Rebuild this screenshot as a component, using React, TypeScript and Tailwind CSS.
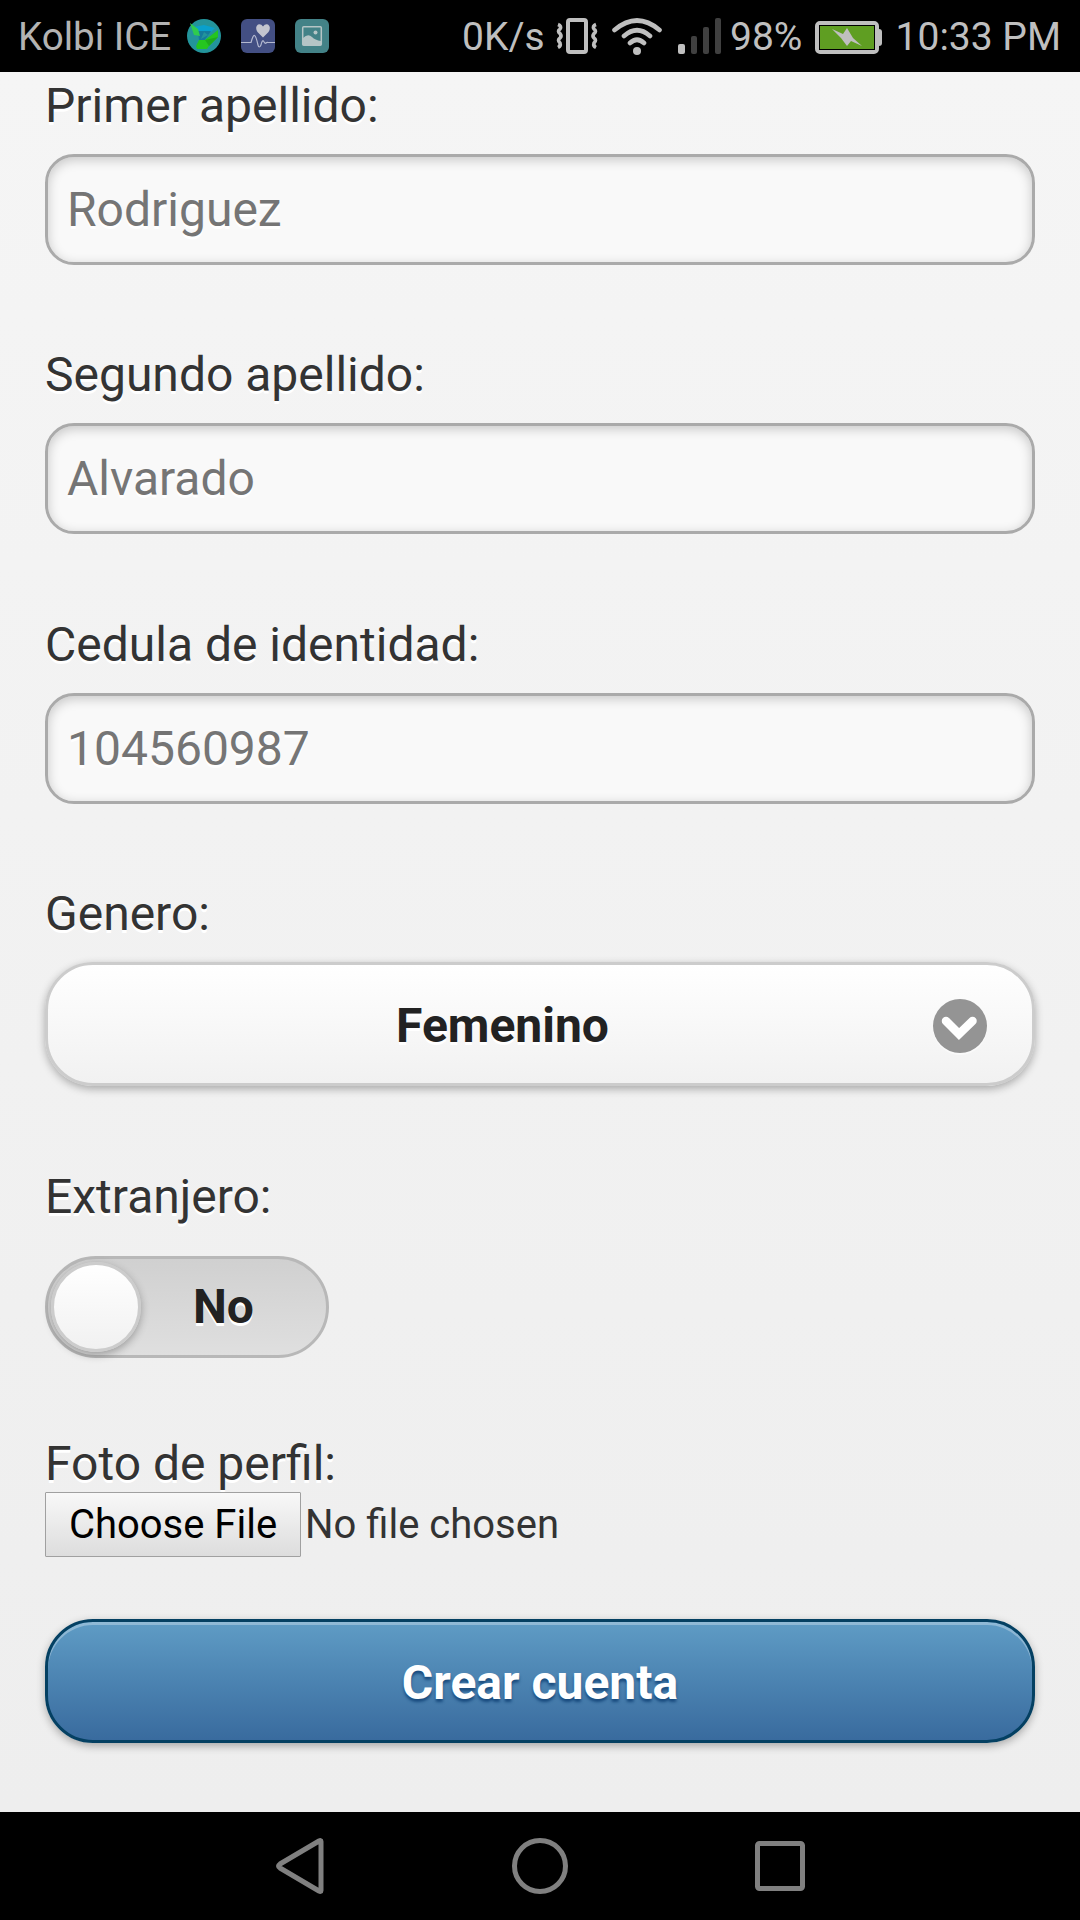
import React from "react";

function StatusBar() {
  return (
    <header className="flex h-[72px] items-center bg-black pl-[18px] pr-[19px] text-[39px] leading-[72px] text-[#bfbfbf]">
      <span className="w-[169px] shrink-0 whitespace-nowrap pt-[2px] text-[38.6px] text-[#b3b3b3]">Kolbi ICE</span>
      <svg width="34" height="34" viewBox="0 0 34 34" className="shrink-0">
        <circle cx="17" cy="17" r="17" fill="#23949b" />
        <path d="M7 8L17 6L28 9L24 13L11 12Z" fill="#0aa0cc" />
        <path d="M11 12L24 12L17 22L12 21Z" fill="#147a9c" />
        <path d="M17 13L21 16L14 20Z" fill="#23949b" />
        <path d="M3 4L11 10L13 17L7 16Z" fill="#2fcb4e" />
        <path d="M31 11V18L22 27L20 30H10L9 27L12 21L18 21Z" fill="#25c520" />
        <path d="M18 21L31 18L22 27Z" fill="#1daa1c" />
      </svg>
      <svg width="34" height="34" viewBox="0 0 34 34" className="ml-5 shrink-0">
        <rect width="34" height="34" rx="6" fill="#434f83" />
        <path d="M0 23.500H10Q12 16 13.500 16.500Q15 17 17 26Q18 30 20 26Q21 21 22.500 22Q24 25 25 24Q26 23 27 23.500H34" fill="none" stroke="#b4b9d0" strokeWidth="1.2" />
        <path d="M22 18.500L16.500 13Q13.500 8 17 5.500Q20 4.500 22 7.500Q24 4.500 27 5.500Q30.500 8 27.500 13Z" fill="#c3c5cf" />
      </svg>
      <svg width="34" height="34" viewBox="0 0 34 34" className="ml-5 shrink-0">
        <rect width="34" height="34" rx="6" fill="#438287" />
        <rect x="7.700" y="7.700" width="18.600" height="18.600" rx="1" fill="none" stroke="#b5c5c6" strokeWidth="1.500" />
        <circle cx="20.500" cy="13.500" r="2" fill="#b5c5c6" />
        <path d="M8 19Q13 14 17 18Q20 21 26 22V26H8Z" fill="#b5c5c6" />
      </svg>
      <span className="ml-[133px] w-[93px] shrink-0 whitespace-nowrap pt-[2px]">0K/s</span>
      <svg width="44" height="38" viewBox="0 0 44 38" className="shrink-0" fill="none" stroke="#bfbfbf">
        <rect x="13" y="3" width="18" height="32" rx="2" strokeWidth="4" />
        <path d="M3 7.500Q7 9 5 12Q2 14 5 16.500Q7 19 5 21Q2 23 5 26Q6 29 3 30.500M41 7.500Q37 9 39 12Q42 14 39 16.500Q37 19 39 21Q42 23 39 26Q38 29 41 30.500" strokeWidth="3.600" />
      </svg>
      <svg width="54" height="40" viewBox="0 0 54 40" className="ml-[11px] shrink-0" fill="none" stroke="#bfbfbf" strokeWidth="4.600" strokeLinecap="round">
        <path d="M4.500 14Q27 -5 49.500 14M14 20Q27 8.500 40 20M20 27Q27 20.500 34 27" />
        <circle cx="27" cy="35" r="4" fill="#bfbfbf" stroke="none" />
      </svg>
      <svg width="44" height="36" viewBox="0 0 44 36" className="ml-[14px] shrink-0">
        <rect x="0" y="26" width="7" height="10" rx="2" fill="#bfbfbf" />
        <rect x="13" y="18" width="6" height="18" rx="2" fill="#404040" />
        <rect x="25" y="9" width="6" height="27" rx="2" fill="#404040" />
        <rect x="37" y="0" width="6" height="36" rx="2" fill="#404040" />
      </svg>
      <span className="ml-[8px] w-[85px] shrink-0 whitespace-nowrap pt-[2px]">98%</span>
      <svg width="68" height="34" viewBox="0 0 68 34" className="mt-[4px] shrink-0">
        <rect x="2" y="2" width="60" height="29" rx="3" fill="none" stroke="#bfbfbf" strokeWidth="4" />
        <rect x="4" y="4" width="56" height="25" fill="#000" />
        <rect x="5" y="5" width="54" height="23" fill="#5f9e22" />
        <path d="M64 8Q67 8 67 11V22Q67 25 64 25Z" fill="#bfbfbf" />
        <path d="M17 8L28 13L32 7L38 17L47 25L36 20L32 25L26 17Z" fill="#bfbfbf" />
      </svg>
      <span className="ml-auto whitespace-nowrap pt-[2px]">10:33 PM</span>
    </header>
  );
}

const label = "block whitespace-nowrap pt-px text-[48px] leading-[66px] text-[#333] [text-shadow:0_3px_0_#fff]";

function Field({ title, value }: { title: string; value: string }) {
  return (
    <div className="mb-[76.4px]">
      <label className={label}>{title}</label>
      <div className="mt-[15px] flex h-[111px] items-center rounded-[29px] border-[3px] border-[#aaa] bg-[#f9f9f9] pl-[19px] pt-px text-[48px] leading-[56px] text-[#757575] [text-shadow:0_3px_0_#fff] shadow-[inset_0_3px_12px_rgba(0,0,0,0.2)]">
        {value}
      </div>
    </div>
  );
}

export default function App() {
  return (
    <div className="flex h-[1920px] w-[1080px] flex-col overflow-hidden bg-black font-[Roboto,sans-serif]">
      <StatusBar />
      <main className="flex h-[1740px] flex-col bg-linear-to-b from-[#f5f5f5] to-[#eee] px-[45px]">
        <Field title="Primer apellido:" value="Rodriguez" />
        <Field title="Segundo apellido:" value="Alvarado" />
        <Field title="Cedula de identidad:" value="104560987" />
        <label className={label}>Genero:</label>
        <div className="mt-[14.8px] flex h-[124px] shrink-0 items-center rounded-[48px] border-[3px] border-[#ccc] bg-linear-to-b from-white to-[#f1f1f1] pl-[54px] pr-[45px] shadow-[0_3px_9px_rgba(0,0,0,0.3)]">
          <span className="flex-1 pr-[30px] pt-[4px] text-center text-[48px] leading-[56px] font-bold text-[#222] [text-shadow:0_3px_0_#fff]">Femenino</span>
          <svg width="54" height="57" viewBox="0 0 54 57" className="mt-[7px]">
            <circle cx="27" cy="29" r="27" fill="#fff" fillOpacity="0.5" />
            <circle cx="27" cy="27" r="27" fill="#949494" />
            <path d="M13 22L26 35L39.500 22" fill="none" stroke="#fff" strokeWidth="8.500" strokeLinecap="round" />
          </svg>
        </div>
        <label className={label + " mt-[77px]"}>Extranjero:</label>
        <div className="mt-[26px] flex h-[102px] w-[284px] shrink-0 items-center rounded-[51px] border-[3px] border-[#b8b8b8] bg-linear-to-b from-[#d0d0d0] to-[#dfdfdf] pl-[3px]">
          <div className="size-[90px] rounded-full border-[3px] border-[#ccc] bg-linear-to-b from-white to-[#f1f1f1] shadow-[0_3px_9px_rgba(0,0,0,0.3)]" />
          <span className="ml-[52px] text-[48px] leading-[56px] font-bold text-[#222] [text-shadow:0_3px_0_#fff]">No</span>
        </div>
        <label className={label + " mt-[72px]"}>Foto de perfil:</label>
        <div className="-mt-[5px] flex h-[65px] shrink-0 items-center text-[40px] leading-[47px] text-[#333]">
          <button className="h-[65px] w-[256px] rounded-[1px] border border-[#a0a0a0] bg-linear-to-b from-[#f8f8f8] to-[#ddd] text-black">Choose File</button>
          <span className="ml-[4px] whitespace-nowrap">No file chosen</span>
        </div>
        <button className="mt-[62px] h-[124px] shrink-0 rounded-[48px] border-[3px] border-[#044062] bg-linear-to-b from-[#5f9cc5] to-[#396b9e] pt-[4px] text-[48px] leading-[56px] font-bold text-white [text-shadow:0_3px_3px_#194b7e] shadow-[inset_0_3px_0_rgba(255,255,255,0.3),0_3px_9px_rgba(0,0,0,0.3)]">
          Crear cuenta
        </button>
      </main>
      <nav className="flex h-[108px] items-center pl-[275px]">
        <svg width="530" height="60" viewBox="0 0 530 60" fill="none" stroke="#808080" strokeWidth="5" strokeLinejoin="round">
          <path d="M46 5.500V54.500Q46 56 44 55L5 32Q2 30 5 28L44 5Q46 4 46 5.500Z" />
          <circle cx="265" cy="30" r="25.500" />
          <rect x="482.500" y="7.500" width="45" height="45" rx="2" />
        </svg>
      </nav>
    </div>
  );
}
